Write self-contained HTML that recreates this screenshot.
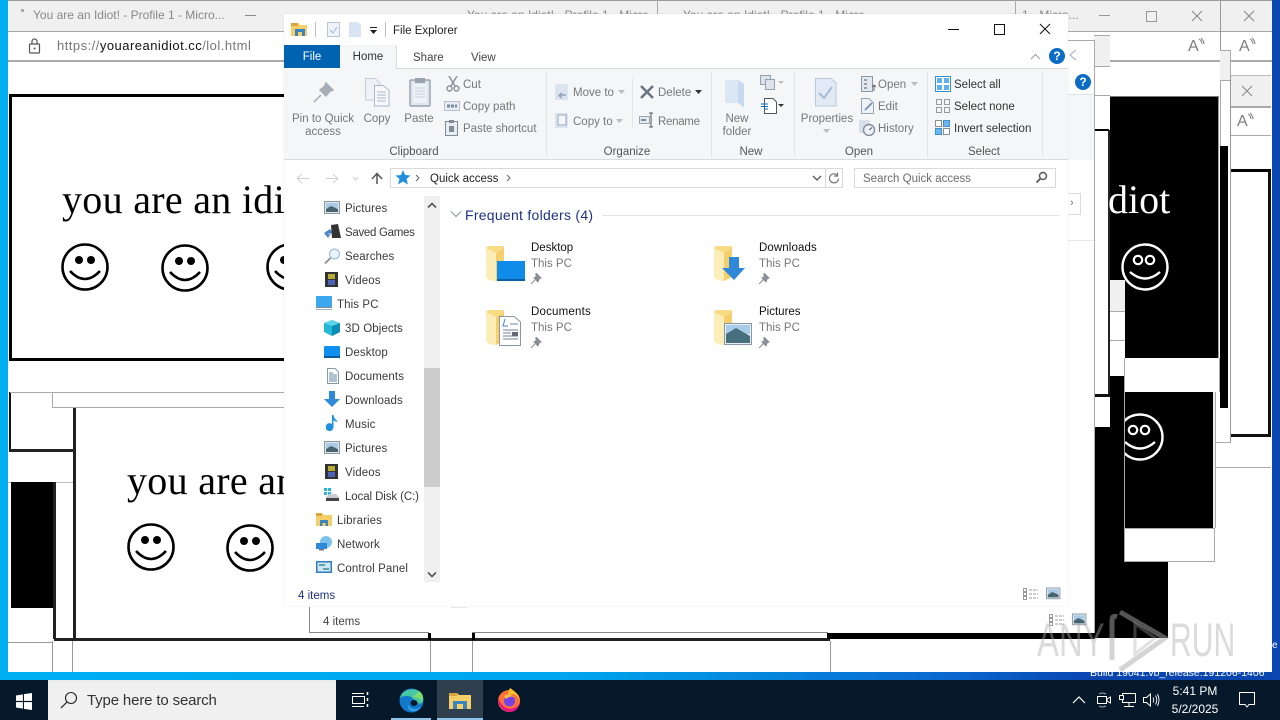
<!DOCTYPE html>
<html><head><meta charset="utf-8"><style>
html,body{margin:0;padding:0;width:1280px;height:720px;overflow:hidden;background:#fff}
body{position:relative;font-family:"Liberation Sans",sans-serif;font-size:11.5px;color:#333}
div,svg,span.t{position:absolute}
.t{white-space:nowrap;line-height:16px;font-size:11.5px;position:absolute}
.t:not([style*="font-size"]){margin-top:1px}
.g{color:#777}
.s{font-family:"Liberation Serif",serif;font-size:40px;line-height:44px;color:#000;white-space:nowrap;position:absolute;letter-spacing:.3px}
.n{color:#3a3a3a;letter-spacing:.1px}
.c{text-align:center}
</style></head><body>
<svg width="0" height="0" style="position:absolute"><defs>
<g id="sm"><circle cx="24" cy="24" r="22.5" fill="none" stroke="currentColor" stroke-width="2.6"/><circle cx="18" cy="17" r="4" fill="currentColor"/><circle cx="30" cy="17" r="4" fill="currentColor"/><path d="M9 28Q24 44 39 28" fill="none" stroke="currentColor" stroke-width="2.6"/></g>
<g id="smw"><circle cx="24" cy="24" r="22.5" fill="none" stroke="#fff" stroke-width="2.4"/><circle cx="17" cy="17" r="4.2" fill="none" stroke="#fff" stroke-width="2.2"/><circle cx="29" cy="17" r="4.2" fill="none" stroke="#fff" stroke-width="2.2"/><path d="M9 29Q24 42 39 29" fill="none" stroke="#fff" stroke-width="2.4"/></g>
<g id="x"><path d="M1 1L11 11M11 1L1 11" stroke="#8a8a8a" stroke-width="1.1" fill="none"/></g>
<g id="rd"><text x="0" y="14" font-family="Liberation Sans" font-size="16" fill="#7d7d7d">A</text><path d="M11 2q3 2 3 5M13 1q3 3 3 6" stroke="#7d7d7d" fill="none"/></g>
<g id="pin"><path d="M5 0L10 5L8 6L7 9L3 5L5 4ZM4 7L0 11" fill="#8a8f96" stroke="#8a8f96"/></g>
<g id="fold"><path d="M0 5L2 3H18V34L14 36L10 38L3 37L0 34Z" fill="#f8dc85"/><path d="M0 5L10 10V38L3 37L0 34Z" fill="#fbeeb9"/><path d="M10 10L18 5V34L10 38Z" fill="#f4cf6c"/></g>
<g id="pics"><rect x=".5" y=".5" width="15" height="12" fill="#dfe8ee" stroke="#8b97a3"/><rect x="2" y="2" width="12" height="5" fill="#a9cbe6"/><path d="M2 8L7 5L14 8V11H2Z" fill="#47646f"/></g>
<g id="vid"><rect x="0" y="0" width="13" height="15" fill="#333"/><rect x="3" y="2" width="7" height="5" fill="#b7ac3c"/><rect x="3" y="8" width="7" height="5" fill="#4a63b8"/></g>
<g id="docs"><path d="M1.5.5H9L12.5 4V15.5H1.5Z" fill="#fff" stroke="#8a97a5"/><path d="M3 5h4M3 7h8M3 9h8M3 11h8M3 13h8" stroke="#5c88ad"/></g>
<g id="dsk"><rect x="0" y="1" width="16" height="12" rx="1" fill="#0f90ee"/><rect x="0" y="11" width="16" height="2" fill="#075a9c"/></g>
</defs></svg>

<!-- wallpaper -->
<div style="left:0;top:0;width:1280px;height:680px;background:linear-gradient(90deg,#00aef2 0,#00a6ee 560px,#0a66cc 960px,#0a45b0 1090px,#0a45b0 1280px)"></div>
<div style="left:8px;top:0;width:1264px;height:672px;background:#fff"></div>
<div style="left:8px;top:0;width:1264px;height:1px;background:#9a9a9a"></div>

<!-- browser chrome left -->
<div style="left:8px;top:1px;width:1264px;height:30px;background:#f0f0f0"></div>
<div style="left:8px;top:31px;width:1264px;height:1px;background:#a8a8a8"></div>
<div style="left:8px;top:60px;width:1264px;height:2px;background:#aaa"></div>
<span class="t" style="left:33px;top:7px;color:#888;font-size:12px">You are an Idiot! - Profile 1 - Micro...</span>
<div style="left:21px;top:9px;width:3px;height:3px;background:#aaa"></div>
<div style="left:245px;top:15px;width:11px;height:1px;background:#888"></div>
<span class="t" style="left:467px;top:7px;color:#888;font-size:12px">You are an Idiot! - Profile 1 - Micro</span>
<span class="t" style="left:683px;top:7px;color:#888;font-size:12px">You are an Idiot! - Profile 1 - Micro</span>
<span class="t" style="left:1022px;top:7px;color:#888;font-size:12px">1 - Micro...</span>
<div style="left:657px;top:0;width:1px;height:16px;background:#aaa"></div>
<div style="left:1015px;top:0;width:1px;height:16px;background:#aaa"></div>
<svg style="left:28px;top:38px" width="13" height="16"><rect x="1.5" y="6" width="10" height="9" rx="1" fill="none" stroke="#555" stroke-width="1.2"/><path d="M4 6V3.5a2.5 2.5 0 0 1 5 0V6" fill="none" stroke="#555" stroke-width="1.2"/><circle cx="6.5" cy="10.5" r="1" fill="#555"/></svg>
<span class="t" style="left:57px;top:38px;font-size:13px;color:#777;letter-spacing:.48px">https://<span style="color:#111">youareanidiot.cc</span>/lol.html</span>

<!-- first idiot page -->
<div style="left:9px;top:94px;width:290px;height:261px;border:3px solid #000;border-right:0;background:#fff"></div>
<div class="s" style="left:62px;top:178px">you are an idi</div>
<svg style="left:61px;top:243px;color:#000" width="48" height="48"><use href="#sm"/></svg>
<svg style="left:161px;top:244px;color:#000" width="48" height="48"><use href="#sm"/></svg>
<svg style="left:266px;top:243px;color:#000" width="48" height="48"><use href="#sm"/></svg>

<!-- lower left stack -->
<div style="left:9px;top:392px;width:2px;height:58px;background:#111"></div>
<div style="left:9px;top:449px;width:65px;height:3px;background:#222"></div>
<div style="left:10px;top:392px;width:300px;height:1px;background:#aaa"></div>
<div style="left:52px;top:393px;width:1px;height:14px;background:#aaa"></div>
<div style="left:52px;top:407px;width:260px;height:1px;background:#aaa"></div>
<div style="left:8px;top:482px;width:65px;height:1px;background:#bbb"></div>
<div style="left:11px;top:482px;width:42px;height:126px;background:#000"></div>
<div style="left:53px;top:482px;width:3px;height:157px;background:#222"></div>
<div style="left:73px;top:408px;width:3px;height:233px;background:#222"></div>
<div style="left:54px;top:638px;width:776px;height:3px;background:#222"></div>
<div style="left:8px;top:642px;width:45px;height:1px;background:#999"></div>
<div style="left:52px;top:641px;width:1px;height:31px;background:#999"></div>
<div style="left:72px;top:641px;width:1px;height:31px;background:#999"></div>
<div style="left:430px;top:641px;width:1px;height:31px;background:#999"></div>
<div style="left:472px;top:641px;width:1px;height:31px;background:#999"></div>
<div style="left:830px;top:641px;width:1px;height:31px;background:#999"></div>
<div style="left:428px;top:628px;width:3px;height:12px;background:#000"></div>
<div style="left:472px;top:628px;width:3px;height:12px;background:#000"></div>
<div style="left:827px;top:632px;width:268px;height:7px;background:#000"></div>
<div class="s" style="left:127px;top:459px">you are an</div>
<svg style="left:127px;top:523px;color:#000" width="48" height="48"><use href="#sm"/></svg>
<svg style="left:226px;top:524px;color:#000" width="48" height="48"><use href="#sm"/></svg>

<!-- right side stack -->
<div style="left:1094px;top:35px;width:16px;height:31px;background:#f0f0f0;border-top:1px solid #aaa"></div>
<div style="left:1094px;top:66px;width:16px;height:1px;background:#aaa"></div>
<div style="left:1094px;top:95px;width:16px;height:1px;background:#aaa"></div>
<div style="left:1094px;top:129px;width:15px;height:2px;background:#000"></div>
<div style="left:1108px;top:130px;width:2px;height:265px;background:#222"></div>
<div style="left:1094px;top:394px;width:16px;height:3px;background:#111"></div>
<div style="left:1094px;top:427px;width:16px;height:211px;background:#000"></div>
<div style="left:1110px;top:376px;width:14px;height:262px;background:#000"></div>
<div style="left:1124px;top:562px;width:44px;height:76px;background:#000"></div>

<div style="left:1110px;top:96px;width:108px;height:262px;background:#000;border-right:1px solid #999;border-top:1px solid #777"></div>
<div style="left:1110px;top:280px;width:15px;height:31px;background:#f0f0f0;border-bottom:1px solid #aaa"></div>
<div style="left:1110px;top:312px;width:15px;height:28px;background:#fff;border-bottom:1px solid #aaa"></div>
<div style="left:1110px;top:341px;width:15px;height:35px;background:#fff"></div>
<div style="left:1125px;top:358px;width:95px;height:34px;background:#fff;border-right:1px solid #aaa;box-sizing:border-box"></div>
<div style="left:1124px;top:358px;width:1px;height:204px;background:#aaa"></div>
<div style="left:1125px;top:392px;width:88px;height:136px;background:#000"></div>
<div style="left:1125px;top:528px;width:90px;height:34px;background:#fff;border-right:1px solid #aaa;border-bottom:1px solid #aaa;border-top:1px solid #aaa;box-sizing:border-box"></div>
<div style="left:1213px;top:392px;width:2px;height:136px;background:#eee;border-right:1px solid #aaa"></div>
<div class="s" style="left:1108px;top:178px;color:#fff;letter-spacing:0">diot</div>
<svg style="left:1121px;top:243px" width="48" height="48"><use href="#smw"/></svg>
<div style="left:1125px;top:413px;width:40px;height:48px;overflow:hidden"><svg style="left:-9px;top:0" width="48" height="48"><use href="#smw"/></svg></div>

<!-- far right windows -->
<div style="left:1220px;top:0;width:1px;height:50px;background:#999"></div>
<div style="left:1220px;top:50px;width:11px;height:31px;background:#f0f0f0;border-top:1px solid #aaa;border-bottom:1px solid #aaa;border-right:1px solid #aaa;box-sizing:border-box"></div>
<div style="left:1220px;top:81px;width:1px;height:65px;background:#aaa"></div>
<div style="left:1220px;top:146px;width:8px;height:262px;background:#000"></div>
<div style="left:1231px;top:75px;width:40px;height:31px;background:#f0f0f0;border-top:1px solid #bbb;box-sizing:border-box"></div>
<div style="left:1230px;top:75px;width:1px;height:367px;background:#999"></div>
<div style="left:1231px;top:106px;width:40px;height:2px;background:#aaa"></div>
<div style="left:1231px;top:135px;width:40px;height:1px;background:#aaa"></div>
<div style="left:1231px;top:169px;width:40px;height:3px;background:#000"></div>
<div style="left:1268px;top:170px;width:3px;height:267px;background:#111"></div>
<div style="left:1231px;top:434px;width:40px;height:3px;background:#111"></div>
<div style="left:1215px;top:442px;width:16px;height:1px;background:#aaa"></div>
<div style="left:1215px;top:467px;width:56px;height:1px;background:#aaa"></div>
<div style="left:1215px;top:408px;width:1px;height:60px;background:#aaa"></div>
<div style="left:1099px;top:15px;width:11px;height:1px;background:#999"></div>
<div style="left:1146px;top:11px;width:9px;height:9px;border:1px solid #999"></div>
<svg style="left:1191px;top:10px" width="12" height="12"><use href="#x"/></svg>
<svg style="left:1243px;top:10px" width="12" height="12"><use href="#x"/></svg>
<svg style="left:1241px;top:85px" width="12" height="12"><use href="#x"/></svg>
<svg style="left:1188px;top:37px" width="18" height="18"><use href="#rd"/></svg>
<svg style="left:1239px;top:37px" width="18" height="18"><use href="#rd"/></svg>
<svg style="left:1237px;top:112px" width="18" height="18"><use href="#rd"/></svg>
<span class="t" style="left:1272px;top:640px;color:#fff;font-size:10px;line-height:12px">e</span>

<!-- rear explorer -->
<div style="left:309px;top:40px;width:785px;height:593px;background:#fff;border-right:1px solid #aaa"></div>
<div style="left:1068px;top:40px;width:26px;height:1px;background:#aaa"></div>
<div style="left:1068px;top:94px;width:26px;height:66px;background:#f5f6f7"></div>
<div style="left:1068px;top:94px;width:26px;height:1px;background:#dbe3ec"></div>
<div style="left:1075px;top:74px;width:16px;height:16px;border-radius:50%;background:#0a6cc4;color:#fff;font:bold 12px/16px 'Liberation Sans',sans-serif;text-align:center">?</div>
<svg style="left:1068px;top:49px" width="10" height="12"><path d="M8 1L2 6L8 11" fill="none" stroke="#a7a7c9"/></svg>
<div style="left:1068px;top:193px;width:13px;height:22px;background:#fff;border:1px solid #ddd;border-left:0;box-sizing:border-box"></div>
<div style="left:1068px;top:193px;width:13px;height:22px;color:#777;font-size:11px;line-height:21px;text-indent:2px">›</div>
<div style="left:1068px;top:240px;width:26px;height:1px;background:#e8e8e8"></div>
<div style="left:309px;top:607px;width:1px;height:26px;background:#888"></div>
<div style="left:309px;top:632px;width:120px;height:1px;background:#888"></div>
<div style="left:472px;top:632px;width:356px;height:1px;background:#888"></div>
<span class="t" style="left:323px;top:613px;color:#444">4 items</span>
<div style="left:451px;top:607px;width:16px;height:1px;background:#e6e6e6"></div>
<svg style="left:1049px;top:613px" width="40" height="14"><rect x=".5" y="1.5" width="3" height="3" fill="none" stroke="#999"/><rect x=".5" y="5.5" width="3" height="3" fill="none" stroke="#999"/><rect x=".5" y="9.5" width="3" height="3" fill="none" stroke="#999"/><path d="M6 3h9M6 7h9M6 11h9" stroke="#999" stroke-dasharray="3 1"/><g transform="translate(23 .5) scale(.9)"><use href="#pics"/></g></svg>

<!-- front explorer -->
<div style="left:284px;top:14px;width:784px;height:592px;background:#fff;box-shadow:0 0 1px rgba(120,120,120,.3)"></div>
<svg style="left:291px;top:21px" width="18" height="17"><path d="M0 2H7L9 4H16V15H0Z" fill="#f6cf68"/><rect x="0" y="2" width="7" height="3" fill="#d9a53c"/><rect x="4" y="8" width="10" height="7" fill="#3a85c0"/><rect x="7" y="11" width="4" height="4" fill="#f6cf68"/></svg>
<div style="left:315px;top:22px;width:1px;height:15px;background:#bbb"></div>
<svg style="left:327px;top:22px" width="14" height="16"><rect x=".5" y=".5" width="12" height="14" fill="#eef3f9" stroke="#b7c6d8"/><path d="M3 8l3 3 4-6" fill="none" stroke="#9bb3cc"/></svg>
<svg style="left:349px;top:22px" width="13" height="16"><path d="M0 0H9L12 3V15H0Z" fill="#d9e4f2"/></svg>
<svg style="left:369px;top:26px" width="9" height="9"><path d="M1 1.5H8" stroke="#222"/><path d="M1 4H8L4.5 8Z" fill="#222"/></svg>
<div style="left:385px;top:22px;width:1px;height:15px;background:#bbb"></div>
<span class="t" style="left:393px;top:22px;color:#222">File Explorer</span>
<div style="left:948px;top:29px;width:11px;height:1px;background:#111"></div>
<div style="left:994px;top:24px;width:9px;height:9px;border:1px solid #111"></div>
<svg style="left:1039px;top:23px" width="12" height="12"><path d="M1 1L11 11M11 1L1 11" stroke="#111" fill="none"/></svg>
<svg style="left:1030px;top:53px" width="11" height="7"><path d="M1 6L5.5 1.5L10 6" stroke="#999" fill="none"/></svg>
<div style="left:1049px;top:48px;width:16px;height:16px;border-radius:50%;background:#0a6cc4;color:#fff;font:bold 12px/16px 'Liberation Sans',sans-serif;text-align:center">?</div>

<!-- ribbon -->
<div style="left:284px;top:69px;width:784px;height:91px;background:#f5f6f7;border-bottom:1px solid #dadbdc;box-sizing:border-box"></div>
<div style="left:397px;top:68px;width:671px;height:1px;background:#dadbdc"></div>
<!-- tabs -->
<div style="left:284px;top:45px;width:56px;height:23px;background:#0063b1;color:#fff;line-height:25px;text-align:center">File</div>
<div style="left:340px;top:45px;width:57px;height:24px;background:#f5f6f7;line-height:25px;text-align:center;border-right:1px solid #dadbdc;box-sizing:border-box">Home</div>
<span class="t" style="left:413px;top:49px;color:#444">Share</span>
<span class="t" style="left:471px;top:49px;color:#444">View</span>
<div style="left:546px;top:72px;width:1px;height:85px;background:#e2e3e4"></div>
<div style="left:711px;top:72px;width:1px;height:85px;background:#e2e3e4"></div>
<div style="left:794px;top:72px;width:1px;height:85px;background:#e2e3e4"></div>
<div style="left:927px;top:72px;width:1px;height:85px;background:#e2e3e4"></div>
<div style="left:1042px;top:72px;width:1px;height:85px;background:#e2e3e4"></div>
<div style="left:632px;top:78px;width:1px;height:50px;background:#e5e6e7"></div>

<svg style="left:312px;top:82px" width="22" height="22"><path d="M14 1L21 8L18 9L14 14L8 8L12 5ZM9 13L2 20" fill="#a6adb6" stroke="#a6adb6" stroke-width="1.5"/></svg>
<span class="t c g" style="left:284px;top:110px;width:78px">Pin to Quick</span>
<span class="t c g" style="left:284px;top:123px;width:78px">access</span>
<svg style="left:365px;top:78px" width="26" height="30"><path d="M.5.5H10L15 5V22H.5Z" fill="#eef2f7" stroke="#c3cedb"/><path d="M9.5 7.5H18L24 12V28H9.5Z" fill="#f7f9fb" stroke="#aab8c8"/><path d="M12 14h9M12 17h9M12 20h9M12 23h9" stroke="#aab8c8"/></svg>
<span class="t c g" style="left:357px;top:110px;width:40px">Copy</span>
<svg style="left:409px;top:77px" width="22" height="30"><rect x="1" y="3" width="20" height="26" rx="1" fill="#dce5f0" stroke="#98a3ae" stroke-width="1.4"/><rect x="4" y="7" width="14" height="19" fill="#eef3f8"/><rect x="6" y="1" width="10" height="5" fill="#98a3ae"/><path d="M6 11h10M6 14h10M6 17h10M6 20h10" stroke="#c5d1de"/></svg>
<span class="t c g" style="left:399px;top:110px;width:40px">Paste</span>
<svg style="left:446px;top:76px" width="14" height="16"><path d="M3 0L9 10M11 0L5 10" stroke="#8a8f96" stroke-width="1.4"/><circle cx="3.5" cy="12.5" r="2.5" fill="none" stroke="#8a8f96" stroke-width="1.4"/><circle cx="10.5" cy="12.5" r="2.5" fill="none" stroke="#8a8f96" stroke-width="1.4"/></svg>
<span class="t g" style="left:463px;top:76px">Cut</span>
<svg style="left:444px;top:101px" width="16" height="10"><rect x=".5" y=".5" width="15" height="9" fill="#e8edf3" stroke="#b8c2cd"/><path d="M3 5h10" stroke="#7a8ba0" stroke-width="3" stroke-dasharray="3 1"/></svg>
<span class="t g" style="left:463px;top:98px">Copy path</span>
<svg style="left:445px;top:120px" width="14" height="16"><rect x=".5" y="1.5" width="12" height="14" fill="#e8edf3" stroke="#7f8b97"/><rect x="4" y="0" width="5" height="3" fill="#7f8b97"/><rect x="4" y="6" width="5" height="6" fill="#7f8b97"/></svg>
<span class="t g" style="left:463px;top:120px">Paste shortcut</span>
<span class="t c" style="left:374px;top:143px;width:80px;color:#555">Clipboard</span>

<svg style="left:555px;top:84px" width="14" height="17"><rect width="13" height="16" fill="#dbe4ef"/><path d="M11 11H5M7 9L4 11.5L7 14" stroke="#8ea2ba" fill="none" stroke-width="1.5"/></svg>
<span class="t g" style="left:573px;top:84px">Move to</span>
<svg style="left:618px;top:90px" width="7" height="4"><path d="M0 0H7L3.500 4Z" fill="#bbb"/></svg>
<svg style="left:555px;top:113px" width="14" height="16"><rect width="13" height="15" fill="#dbe4ef"/><rect x="3" y="2" width="8" height="10" fill="#f3f6fa" stroke="#98a8bb"/></svg>
<span class="t g" style="left:573px;top:113px">Copy to</span>
<svg style="left:616px;top:119px" width="7" height="4"><path d="M0 0H7L3.500 4Z" fill="#bbb"/></svg>
<svg style="left:640px;top:85px" width="14" height="14"><path d="M1 1L13 13M13 1L1 13" stroke="#6c7682" stroke-width="2.6"/></svg>
<span class="t g" style="left:658px;top:84px">Delete</span>
<svg style="left:695px;top:90px" width="7" height="4"><path d="M0 0H7L3.500 4Z" fill="#333"/></svg>
<svg style="left:639px;top:112px" width="17" height="16"><rect x=".5" y="4.500" width="10" height="7" fill="#e6ebf1" stroke="#9aa5b1"/><rect x="2" y="7" width="5" height="2" fill="#7f8b97"/><path d="M12 1v14M10 1h4M10 15h4" stroke="#555"/></svg>
<span class="t g" style="left:658px;top:113px;letter-spacing:-.3px">Rename</span>
<span class="t c" style="left:587px;top:143px;width:80px;color:#555">Organize</span>

<svg style="left:725px;top:80px" width="21" height="27"><path d="M0 0H13L19 4V27L13 23H0Z" fill="#dbe7f4"/><path d="M13 0V23L19 27V4Z" fill="#c7d9ee"/></svg>
<span class="t c g" style="left:712px;top:110px;width:50px">New</span>
<span class="t c g" style="left:712px;top:123px;width:50px">folder</span>
<svg style="left:760px;top:75px" width="24" height="18"><rect x=".5" y=".5" width="10" height="9" fill="#dde4ec" stroke="#93a0ad"/><rect x="5.500" y="4.500" width="9" height="10" fill="#dde4ec" stroke="#93a0ad"/><path d="M18 6H24L21 9Z" fill="#bbb"/></svg>
<svg style="left:761px;top:98px" width="24" height="17"><path d="M3.500.5H12L15.500 4V15.500H3.500Z" fill="#fff" stroke="#555"/><path d="M0 6h7M0 8.500h7M3 11h4" stroke="#0a6cc4"/><path d="M17 6H23L20 9Z" fill="#333"/></svg>
<span class="t c" style="left:711px;top:143px;width:80px;color:#555">New</span>

<svg style="left:815px;top:78px" width="22" height="30"><path d="M.5.5H16L21 5V28H.5Z" fill="#e1eaf5" stroke="#bac9da"/><path d="M4 15l5 5 8-11" fill="none" stroke="#a9bcd2" stroke-width="2"/></svg>
<span class="t c g" style="left:795px;top:110px;width:64px">Properties</span>
<svg style="left:823px;top:129px" width="7" height="4"><path d="M0 0H7L3.500 4Z" fill="#bbb"/></svg>
<svg style="left:861px;top:76px" width="16" height="17"><rect x=".5" y=".5" width="11" height="15" fill="#e3e9f0" stroke="#8c98a5"/><path d="M3 4h3M3 8h3M3 12h3" stroke="#555"/><path d="M13 9v6M11 11l2-2 2 2" stroke="#667" fill="none"/></svg>
<span class="t g" style="left:878px;top:76px">Open</span>
<svg style="left:911px;top:82px" width="7" height="4"><path d="M0 0H7L3.500 4Z" fill="#bbb"/></svg>
<svg style="left:861px;top:98px" width="14" height="17"><path d="M.5.5H8L12.500 5V15.500H.5Z" fill="#eef2f6" stroke="#98a5b2"/><path d="M4 12L11 5" stroke="#6f8db0" stroke-width="1.6"/></svg>
<span class="t g" style="left:878px;top:98px">Edit</span>
<svg style="left:859px;top:120px" width="17" height="16"><rect width="11" height="13" fill="#d8e1ea"/><circle cx="10" cy="10" r="5.500" fill="#eef2f6" stroke="#7f8d9b" stroke-width="1.4"/><path d="M10 10L13 7.500" stroke="#556"/></svg>
<span class="t g" style="left:878px;top:120px">History</span>
<span class="t c" style="left:819px;top:143px;width:80px;color:#555">Open</span>

<svg style="left:935px;top:76px" width="16" height="16"><rect x=".5" y=".5" width="15" height="15" fill="#fff" stroke="#3f8fd0"/><rect x="2" y="2" width="5" height="5" fill="#5fb0ee"/><rect x="9" y="2" width="5" height="5" fill="#5fb0ee"/><rect x="2" y="9" width="5" height="5" fill="#5fb0ee"/><rect x="9" y="9" width="5" height="5" fill="#5fb0ee"/></svg>
<span class="t" style="left:954px;top:76px">Select all</span>
<svg style="left:936px;top:99px" width="15" height="15" fill="none" stroke="#9a9a9a"><rect x=".5" y=".5" width="5" height="5"/><rect x="8.500" y=".5" width="5" height="5"/><rect x=".5" y="8.500" width="5" height="5"/><rect x="8.500" y="8.500" width="5" height="5"/></svg>
<span class="t" style="left:954px;top:98px">Select none</span>
<svg style="left:935px;top:120px" width="16" height="16"><rect x=".5" y=".5" width="6" height="6" fill="#fff" stroke="#8d8d8d"/><rect x="8.500" y=".5" width="6" height="6" fill="#6bb6ef" stroke="#3f8fd0"/><rect x=".5" y="8.500" width="6" height="6" fill="#6bb6ef" stroke="#3f8fd0"/><rect x="8.500" y="8.500" width="6" height="6" fill="#fff" stroke="#8d8d8d"/></svg>
<span class="t" style="left:954px;top:120px">Invert selection</span>
<span class="t c" style="left:944px;top:143px;width:80px;color:#555">Select</span>

<!-- address bar -->
<svg style="left:296px;top:172px" width="90" height="13"><path d="M1 6.500H13M1 6.500L6 2M1 6.500L6 11" stroke="#d0d0d0" fill="none"/><path d="M30 6.500H42M42 6.500L37 2M42 6.500L37 11" stroke="#d0d0d0" fill="none"/><path d="M57 5L59.500 8L62 5" stroke="#d0d0d0" fill="none"/><path d="M81 12V2M76 7L81 1.500L86 7" stroke="#555" fill="none" stroke-width="1.500"/></svg>
<div style="left:390px;top:168px;width:436px;height:20px;border:1px solid #d9d9d9;box-sizing:border-box"></div>
<svg style="left:395px;top:170px" width="16" height="15"><path d="M8 0L10 5L15.500 5.500L11.500 9L13 14.500L8 11.500L3 14.500L4.500 9L.5 5.500L6 5Z" fill="#1f8de0"/></svg>
<svg style="left:415px;top:174px" width="6" height="8"><path d="M1 1L4 4L1 7" stroke="#666" fill="none"/></svg>
<span class="t" style="left:430px;top:170px;color:#222">Quick access</span>
<svg style="left:506px;top:174px" width="6" height="8"><path d="M1 1L4 4L1 7" stroke="#666" fill="none"/></svg>
<svg style="left:812px;top:175px" width="10" height="7"><path d="M1 1L5 5L9 1" stroke="#555" fill="none" stroke-width="1.300"/></svg>
<div style="left:826px;top:168px;width:17px;height:20px;border:1px solid #d9d9d9;border-left:0;box-sizing:border-box"></div>
<svg style="left:828px;top:172px" width="12" height="12"><path d="M9.500 3.500A4.500 4.500 0 1 0 10.500 6.500M9.500 .5V4H6" stroke="#777" fill="none" stroke-width="1.200"/></svg>
<div style="left:854px;top:168px;width:202px;height:20px;border:1px solid #d9d9d9;box-sizing:border-box"></div>
<span class="t" style="left:863px;top:170px;color:#6d6d6d">Search Quick access</span>
<svg style="left:1035px;top:171px" width="13" height="13"><circle cx="8" cy="5" r="3.500" fill="none" stroke="#555" stroke-width="1.400"/><path d="M5.500 7.500L1.500 11.500" stroke="#555" stroke-width="1.800"/></svg>

<!-- nav pane -->
<svg style="left:324px;top:201px" width="17" height="14"><use href="#pics"/></svg><span class="t n" style="left:345px;top:200px">Pictures</span>
<svg style="left:324px;top:224px" width="18" height="16"><path d="M0 9L6 5L8 8L4 14Z" fill="#4d86c8"/><path d="M7 1L14 0L17 14H8Z" fill="#333"/><path d="M4 10h3" stroke="#a9c8ec"/></svg><span class="t n" style="left:345px;top:224px;letter-spacing:-.3px">Saved Games</span>
<svg style="left:324px;top:248px" width="17" height="17"><circle cx="10.500" cy="6" r="5" fill="#e8f3fb" stroke="#9ab6cc"/><path d="M6.500 10L1 15.500" stroke="#8c8c8c" stroke-width="1.800"/></svg><span class="t n" style="left:345px;top:248px">Searches</span>
<svg style="left:325px;top:272px" width="14" height="16"><use href="#vid"/></svg><span class="t n" style="left:345px;top:272px">Videos</span>
<svg style="left:316px;top:296px" width="17" height="15"><rect width="16" height="11" rx="1" fill="#3ba7ee"/><rect x="0" y="11" width="16" height="1" fill="#7a8c9a"/><rect x="0" y="13" width="16" height="1" fill="#a5b2bc"/></svg><span class="t n" style="left:337px;top:296px">This PC</span>
<svg style="left:324px;top:320px" width="17" height="16"><path d="M8 0L16 3V12L8 16L0 12V3Z" fill="#25b8d6"/><path d="M8 6L16 3V12L8 16Z" fill="#0d8cb8"/><path d="M0 3L8 0L16 3L8 6Z" fill="#5ed4e8"/></svg><span class="t n" style="left:345px;top:320px">3D Objects</span>
<svg style="left:324px;top:345px" width="17" height="14"><use href="#dsk"/></svg><span class="t n" style="left:345px;top:344px">Desktop</span>
<svg style="left:326px;top:368px" width="14" height="16"><use href="#docs"/></svg><span class="t n" style="left:345px;top:368px">Documents</span>
<svg style="left:324px;top:391px" width="16" height="17"><path d="M5 0H11V8H16L8 16L0 8H5Z" fill="#2f88d8"/></svg><span class="t n" style="left:345px;top:392px">Downloads</span>
<svg style="left:326px;top:415px" width="13" height="17"><path d="M6 0h1.500q.5 4 4 6l-1 1q-2-1-3-2V12a4 4 0 1 1-1.500-3Z" fill="#1c93dc"/></svg><span class="t n" style="left:345px;top:416px">Music</span>
<svg style="left:324px;top:441px" width="17" height="14"><use href="#pics"/></svg><span class="t n" style="left:345px;top:440px">Pictures</span>
<svg style="left:325px;top:464px" width="14" height="16"><use href="#vid"/></svg><span class="t n" style="left:345px;top:464px">Videos</span>
<svg style="left:324px;top:488px" width="16" height="15"><rect x="0" y="0" width="3" height="3" fill="#25b8d6"/><rect x="4" y="0" width="3" height="3" fill="#25b8d6"/><rect x="0" y="4" width="3" height="3" fill="#25b8d6"/><rect x="4" y="4" width="3" height="3" fill="#25b8d6"/><path d="M2 9L5 6H12L15 9V13H2Z" fill="#c8cdd2"/><rect x="2" y="10" width="13" height="3" fill="#444"/></svg><span class="t n" style="left:345px;top:488px;letter-spacing:-.1px">Local Disk (C:)</span>
<svg style="left:316px;top:512px" width="16" height="15"><path d="M0 1H6L8 3H16V14H0Z" fill="#f6cf68"/><rect x="0" y="1" width="6" height="3" fill="#d9a53c"/><rect x="4" y="8" width="8" height="6" fill="#3a85c0"/><rect x="6.500" y="11" width="3" height="3" fill="#f6cf68"/></svg><span class="t n" style="left:337px;top:512px">Libraries</span>
<svg style="left:316px;top:536px" width="17" height="15"><circle cx="10" cy="6" r="6" fill="#7cc1ea"/><rect x="0" y="7" width="11" height="6" fill="#2f88d8"/><rect x="3" y="13" width="5" height="1.500" fill="#777"/></svg><span class="t n" style="left:337px;top:536px">Network</span>
<svg style="left:316px;top:561px" width="16" height="13"><rect width="16" height="12" fill="#2e7fc0"/><rect x="1.500" y="1.500" width="13" height="9" fill="#cfe6f5"/><path d="M3 4h6M7 8h6" stroke="#3a8a8a" stroke-width="1.500"/></svg><span class="t n" style="left:337px;top:560px">Control Panel</span>
<div style="left:424px;top:196px;width:16px;height:386px;background:#f0f0f0"></div>
<div style="left:424px;top:368px;width:16px;height:119px;background:#cdcdcd"></div>
<svg style="left:427px;top:202px" width="10" height="7"><path d="M1 5.500L5 1.500L9 5.500" stroke="#555" fill="none" stroke-width="1.600"/></svg>
<svg style="left:427px;top:571px" width="10" height="7"><path d="M1 1.500L5 5.500L9 1.500" stroke="#555" fill="none" stroke-width="1.600"/></svg>

<!-- content -->
<svg style="left:450px;top:210px" width="12" height="9"><path d="M1 1.500L6 6.500L11 1.500" stroke="#8a8f9c" fill="none"/></svg>
<span class="t" style="left:465px;top:206px;font-size:14px;line-height:18px;color:#1e3287;letter-spacing:.27px">Frequent folders (4)</span>
<div style="left:602px;top:215px;width:458px;height:1px;background:#e5e5e5"></div>

<svg style="left:486px;top:243px" width="40" height="41"><use href="#fold"/><rect x="11" y="18" width="28" height="20" fill="#0f8bea"/><rect x="11" y="36" width="28" height="2" fill="#0a5fa6"/></svg>
<span class="t" style="left:531px;top:239px;color:#111">Desktop</span>
<span class="t g" style="left:531px;top:255px">This PC</span>
<svg style="left:531px;top:273px" width="12" height="12"><use href="#pin"/></svg>

<svg style="left:714px;top:243px" width="40" height="41"><use href="#fold"/><path d="M15 14H25V25H31L20 37L8 25H15Z" fill="#2f88d8"/></svg>
<span class="t" style="left:759px;top:239px;color:#111;letter-spacing:.1px">Downloads</span>
<span class="t g" style="left:759px;top:255px">This PC</span>
<svg style="left:759px;top:273px" width="12" height="12"><use href="#pin"/></svg>

<svg style="left:486px;top:307px" width="40" height="41"><use href="#fold"/><path d="M13.500 9.500H28L34.500 15V38.500H13.500Z" fill="#fff" stroke="#8a97a5"/><path d="M19 12L17 19H22" stroke="#3a8ad0" fill="none"/><path d="M24 17h8M17 23h15M17 26h8M17 29h15M17 32h15" stroke="#6f8196"/><rect x="26" y="25" width="6" height="4" fill="#667"/></svg>
<span class="t" style="left:531px;top:303px;color:#111;letter-spacing:.2px">Documents</span>
<span class="t g" style="left:531px;top:319px">This PC</span>
<svg style="left:531px;top:337px" width="12" height="12"><use href="#pin"/></svg>

<svg style="left:714px;top:307px" width="40" height="41"><use href="#fold"/><rect x="10.500" y="16.500" width="27" height="21" fill="#e8eef3" stroke="#8b97a3"/><rect x="12" y="18" width="24" height="9" fill="#a8cde8"/><path d="M12 27L22 21L36 29V36H12Z" fill="#46707d"/></svg>
<span class="t" style="left:759px;top:303px;color:#111">Pictures</span>
<span class="t g" style="left:759px;top:319px">This PC</span>
<svg style="left:759px;top:337px" width="12" height="12"><use href="#pin"/></svg>

<span class="t" style="left:298px;top:587px;color:#1e3287">4 items</span>
<svg style="left:1023px;top:587px" width="38" height="14"><rect x=".5" y="1.500" width="3" height="3" fill="none" stroke="#999"/><rect x=".5" y="5.500" width="3" height="3" fill="none" stroke="#999"/><rect x=".5" y="9.500" width="3" height="3" fill="none" stroke="#999"/><path d="M6 3h9M6 7h9M6 11h9" stroke="#999" stroke-dasharray="3 1"/><g transform="translate(23 .5) scale(.9)"><use href="#pics"/></g></svg>

<!-- build text -->
<div style="left:1090px;top:672px;width:190px;height:8px;overflow:hidden"><span class="t" style="left:0;top:-7px;color:#fff;font-size:10.500px">Build 19041.vb_release.191206-1406</span></div>

<!-- watermark -->
<span class="t" style="left:1037px;top:612px;font-size:47px;line-height:56px;color:rgba(170,170,170,.42);transform:scaleX(.7);transform-origin:left">ANY</span>
<span class="t" style="left:1170px;top:612px;font-size:47px;line-height:56px;color:rgba(170,170,170,.42);transform:scaleX(.64);transform-origin:left">RUN</span>
<svg style="left:1105px;top:608px" width="66" height="66"><path d="M7 52V12Q7 7 12 9M15 4L60 30L15 62" fill="none" stroke="rgba(170,170,170,.5)" stroke-width="5"/><path d="M30 16L50 30L30 46Z" fill="none" stroke="rgba(170,170,170,.35)" stroke-width="3"/></svg>

<!-- taskbar -->
<div style="left:0;top:680px;width:1280px;height:40px;background:#06192a"></div>
<svg style="left:16px;top:693px" width="16" height="17" viewBox="0 0 15 15" preserveAspectRatio="none"><path d="M0 2.200L6.500 1.200V7H0ZM7.500 1L15 0V7H7.500ZM0 8H6.500V13.800L0 12.800ZM7.500 8H15V15L7.500 14Z" fill="#fff"/></svg>
<div style="left:48px;top:680px;width:288px;height:40px;background:#f0f0f0;border-top:1px solid #e4efe4;box-sizing:border-box"></div>
<svg style="left:60px;top:691px" width="18" height="18"><circle cx="11" cy="7" r="5.500" fill="none" stroke="#222" stroke-width="1.100"/><path d="M7 11L1 17" stroke="#222" stroke-width="1.200"/></svg>
<span class="t" style="left:87px;top:693px;font-size:15px;color:#333;letter-spacing:-.15px">Type here to search</span>
<svg style="left:352px;top:692px" width="17" height="16" fill="none" stroke="#fff"><rect x=".5" y="4.500" width="12" height="7"/><path d="M0 1.500H12M0 14.500H12"/><path d="M15.500 0V3M15.500 6V9M15.500 12V15" stroke-width="1.500"/></svg>
<svg style="left:399px;top:688px" width="25" height="25"><circle cx="12.500" cy="12.500" r="12" fill="#1178cc"/><path d="M1 10C3 2 13-1 20 3C25 6 25 12 23 15C20 17 16 14 15 11C11 7 5 7 1 10Z" fill="#46c9a4"/><path d="M13 11C16 8 21 10 23.500 14C24.500 9 23 5 20 3C18 6 15 7 13 11Z" fill="#7fdc6a"/><ellipse cx="15" cy="15" rx="3.500" ry="3" fill="#06192a"/><path d="M9 15C9 21 16 23 22 19C18 25 7 25 9 15Z" fill="#35a4e8"/></svg>
<div style="left:437px;top:680px;width:46px;height:40px;background:#2f3f4d"></div>
<div style="left:391px;top:718px;width:40px;height:2px;background:#8fc3ea"></div>
<div style="left:437px;top:718px;width:46px;height:2px;background:#8fc3ea"></div>
<svg style="left:449px;top:691px" width="22" height="19"><path d="M0 2H8L10 4H22V18H0Z" fill="#f6cf68"/><rect x="0" y="2" width="8" height="3" fill="#d9a53c"/><rect x="4" y="10" width="14" height="8" fill="#3a85c0"/><rect x="8" y="13" width="6" height="5" fill="#f6cf68"/></svg>
<svg style="left:497px;top:688px" width="24" height="24"><circle cx="12" cy="13" r="11" fill="#ff7139"/><path d="M13 0C18 3 23 8 23 13C20 5 14 5 12 8C10 5 12 2 13 0Z" fill="#ffc229"/><path d="M1 10C1 18 6 24 13 24C18 24 22 20 23 15C20 20 14 22 9 20C5 18 3 14 1 10Z" fill="#e31587"/><circle cx="12.500" cy="13" r="5.500" fill="#7542e5"/><path d="M7 8C10 6 14 6 17 9C14 8 11 9 9 11Z" fill="#ffbd4f"/></svg>

<svg style="left:1072px;top:695px" width="14" height="9"><path d="M1 8L7 2L13 8" stroke="#fff" fill="none" stroke-width="1.200"/></svg>
<svg style="left:1097px;top:692px" width="14" height="16" fill="none" stroke="#fff"><rect x=".5" y="4.500" width="9" height="7"/><path d="M10 7L13.500 5V11L10 9Z"/><path d="M2 2Q5 0 9 2M2 14Q5 16 9 14" stroke="#aaa"/></svg>
<svg style="left:1119px;top:693px" width="17" height="15" fill="none" stroke="#fff"><rect x="3.500" y=".5" width="13" height="9"/><rect x=".5" y="2.500" width="4" height="4" fill="#06192a"/><path d="M10 10V13M5 13.500H15"/></svg>
<svg style="left:1143px;top:692px" width="17" height="16" fill="none" stroke="#fff"><path d="M.5 5.500H3.500L7.500 2V14L3.500 10.500H.5Z"/><path d="M10 5.500Q11.500 8 10 10.500M12.500 3.500Q15 8 12.500 12.500M14.500 2Q17.500 8 14.500 14" stroke-width=".9"/></svg>
<span class="t c" style="left:1165px;top:683px;width:60px;color:#fff;font-size:12px">5:41 PM</span>
<span class="t c" style="left:1165px;top:701px;width:60px;color:#fff;font-size:12px">5/2/2025</span>
<svg style="left:1239px;top:692px" width="17" height="16"><path d="M.5.5H15.500V12.500H10L8 15L6 12.500H.5Z" fill="none" stroke="#fff"/></svg>
</body></html>
